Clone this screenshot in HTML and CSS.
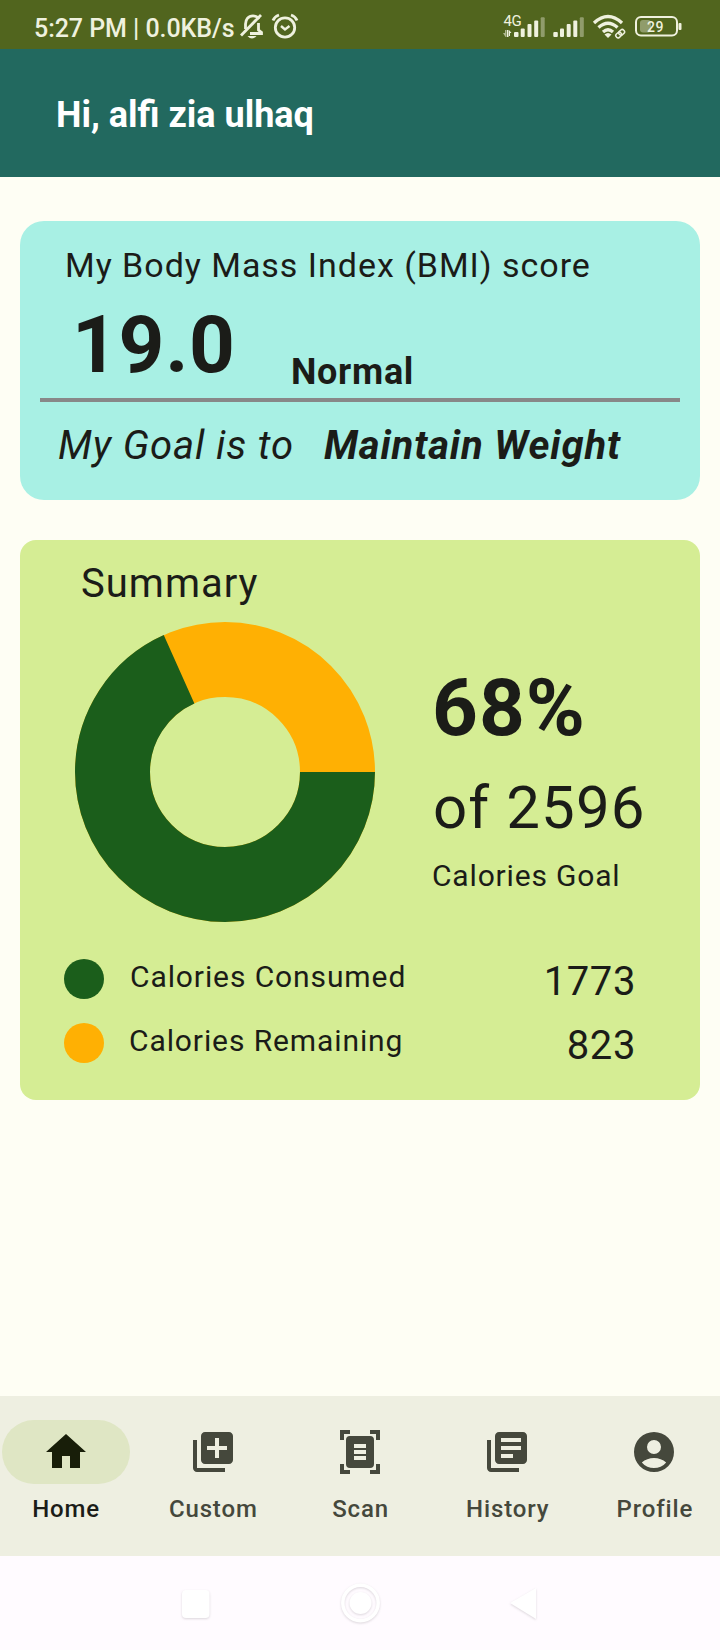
FILE: index.html
```html
<!DOCTYPE html>
<html lang="en">
<head>
<meta charset="utf-8">
<title>Home</title>
<link rel="stylesheet" href="styles.css">
</head>
<body>
<div class="phone">
  <div class="status-bar">
    <span class="status-text">5:27 PM | 0.0KB/s</span>
    <svg class="bell" width="26" height="28" viewBox="0 0 26 28" fill="none" stroke="#eff1de" stroke-width="2.800">
      <path d="M20 6C18 3.500 16 2.800 14 2.800C9 2.800 6.500 7 6.500 11V16M11 20.500H22.500V19.500L19.500 17V10"/>
      <path d="M2 22.500L22 2"/>
      <path d="M8.500 23H17.500Q13 28 8.500 23Z" fill="#eff1de" stroke="none"/>
    </svg>
    <svg class="alarm" width="28" height="28" viewBox="0 0 28 28" fill="none" stroke="#eff1de" stroke-width="2.800">
      <circle cx="14" cy="14.500" r="9.700"/>
      <path d="M10 13L14 16.500L18.500 13" stroke-width="2.400"/>
      <path d="M2 7.500Q3.500 3.500 8 2M20 2Q24.500 3.500 26 7.500" stroke-width="2.800"/>
    </svg>
    <svg class="signal" width="84" height="28" viewBox="0 0 84 28" fill="#eff1de">
      <text class="network" x="1.500" y="12.500">4G</text>
      <path d="M1 20H3V17H4.500V24H3.500Z" opacity=".6"/>
      <path d="M5 17H6.500V24H5ZM7 17L9.500 20H8V23H7Z"/>
      <rect x="12" y="19" width="4.500" height="5" rx="1"/>
      <rect x="18.700" y="15.500" width="4" height="8.500" rx="1"/>
      <rect x="25.500" y="11" width="4" height="13" rx="1"/>
      <rect x="32.200" y="7.500" width="4" height="16.500" rx="1"/>
      <rect x="38.700" y="4.300" width="4" height="19.700" rx="1" opacity=".4"/>
      <rect x="51.300" y="19" width="4.500" height="5" rx="1"/>
      <rect x="58" y="15.500" width="4" height="8.500" rx="1"/>
      <rect x="64.700" y="11" width="4" height="13" rx="1"/>
      <rect x="71.300" y="7.500" width="4" height="16.500" rx="1"/>
      <rect x="77.800" y="4.300" width="4" height="19.700" rx="1" opacity=".4"/>
    </svg>
    <svg class="wifi" width="34" height="26" viewBox="0 0 34 26" fill="none" stroke="#eff1de">
      <path d="M2 9Q16 -4 30 9M6.500 13.500Q16 5 25.500 13.500M11 18Q16 13.500 21 18" stroke-width="3.300"/>
      <path d="M12.500 20.500Q16 17.500 19.500 20.500L16 24Z" fill="#eff1de" stroke="none"/>
      <g transform="rotate(-42 28 19.500)" stroke-width="1.500"><rect x="23" y="17.500" width="6" height="4.500" rx="2"/><rect x="27" y="17.500" width="6" height="4.500" rx="2"/></g>
    </svg>
    <svg class="battery" width="48" height="22" viewBox="0 0 48 22">
      <rect x="1" y="1" width="41" height="18.500" rx="5" fill="none" stroke="#eff1de" stroke-width="2"/>
      <rect x="5" y="4" width="11" height="12.500" rx="3" fill="#eff1de" opacity=".4"/>
      <rect x="43.500" y="7" width="3" height="7" rx="1" fill="#eff1de"/>
      <text class="charge" x="12" y="15.500" fill="#eff1de">29</text>
    </svg>
  </div>
  <header class="app-bar"><h1>Hi, alfi zia ulhaq</h1></header>
  <main class="content">
    <section class="card bmi">
      <p class="bmi-title">My Body Mass Index (BMI) score</p>
      <div class="bmi-row"><span class="score">19.0</span><span class="level">Normal</span></div>
      <hr>
      <p class="goal"><span>My Goal is to</span><b>Maintain Weight</b></p>
    </section>
    <section class="card summary">
      <h2>Summary</h2>
      <div class="overview">
        <svg class="donut" width="300" height="300" viewBox="0 0 300 300">
          <circle cx="150" cy="150" r="112.500" fill="none" stroke="#ffb003" stroke-width="75"/>
          <circle cx="150" cy="150" r="112.500" fill="none" stroke="#1b5e1b" stroke-width="75" pathLength="100" stroke-dasharray="68.300 31.700"/>
        </svg>
        <div class="figures">
          <span class="percent">68%</span>
          <span class="total">of 2596</span>
          <span class="caption">Calories Goal</span>
        </div>
      </div>
      <ul class="legend">
        <li><i class="dot consumed"></i><span>Calories Consumed</span><b>1773</b></li>
        <li><i class="dot remaining"></i><span class="nudge">Calories Remaining</span><b>823</b></li>
      </ul>
    </section>
  </main>
  <nav class="tabs">
    <a class="tab active"><span class="pill"><svg viewBox="0 0 24 24"><path d="M10 20v-6h4v6h5v-8h3L12 3 2 12h3v8z"/></svg></span><span class="label">Home</span></a>
    <a class="tab"><span class="pill"><svg viewBox="0 0 24 24"><path d="M4 6H2v14c0 1.100.900 2 2 2h14v-2H4V6zm16-4H8c-1.100 0-2 .900-2 2v12c0 1.100.900 2 2 2h12c1.100 0 2-.900 2-2V4c0-1.100-.900-2-2-2zm-1 9h-4v4h-2v-4H9V9h4V5h2v4h4v2z"/></svg></span><span class="label">Custom</span></a>
    <a class="tab"><span class="pill"><svg viewBox="0 0 24 24"><path fill-rule="evenodd" d="M2 1H7V3H4V6H2ZM17 1H22V6H20V3H17ZM2 18H4V21H7V23H2ZM20 18H22V23H17V21H20ZM7 4H17Q19 4 19 6V18Q19 20 17 20H7Q5 20 5 18V6Q5 4 7 4ZM9 8V10H15V8ZM9 11V13H15V11ZM9 14V16H15V14Z"/></svg></span><span class="label">Scan</span></a>
    <a class="tab"><span class="pill"><svg viewBox="0 0 24 24"><path d="M4 6H2v14c0 1.100.900 2 2 2h14v-2H4V6zm16-4H8c-1.100 0-2 .900-2 2v12c0 1.100.900 2 2 2h12c1.100 0 2-.900 2-2V4c0-1.100-.900-2-2-2zm-1 9H9V9h10v2zm-4 4H9v-2h6v2zm4-8H9V5h10v2z"/></svg></span><span class="label">History</span></a>
    <a class="tab"><span class="pill"><svg viewBox="0 0 24 24"><path fill-rule="evenodd" d="M12 2a10 10 0 1 0 0 20a10 10 0 1 0 0-20zM12 6a3.500 3.500 0 1 1 0 7a3.500 3.500 0 1 1 0-7zM12 20C9.700 20 7.500 19 5.900 17.200C7.500 15.800 9.700 15 12 15C14.300 15 16.500 15.800 18.100 17.200C16.500 19 14.300 20 12 20Z"/></svg></span><span class="label">Profile</span></a>
  </nav>
  <div class="system-nav">
    <svg width="40" height="44" viewBox="0 0 40 44"><rect x="6" y="9" width="27.500" height="28" rx="4"/></svg>
    <svg width="44" height="44" viewBox="0 0 44 44"><circle class="ring" cx="22.500" cy="22" r="17.700"/><circle cx="22.500" cy="22" r="11"/></svg>
    <svg width="40" height="44" viewBox="0 0 40 44"><path d="M6 22L32 7V38Z"/></svg>
  </div>
</div>
</body>
</html>
```
FILE: styles.css
```css
* { box-sizing: border-box; }
body { margin: 0; font-family: Roboto, sans-serif; color: #1b1c18; }
h1, h2, p, ul { margin: 0; padding: 0; font-weight: 400; }
svg { display: block; flex: none; }

.phone { width: 720px; height: 1650px; display: flex; flex-direction: column; background: #fefef4; letter-spacing: 1px; overflow: hidden; }

.status-bar { height: 49px; flex: none; background: #51651e; color: #eff1de; display: flex; align-items: flex-start; padding: 0 37px 0 34px; }
.status-text { font-size: 25px; line-height: 30px; font-weight: 500; letter-spacing: -.05px; margin-top: 14px; width: 205px; white-space: nowrap; }
.bell { margin: 13px 0 0 0; }
.alarm { margin: 13px 0 0 6px; }
.signal { margin: 13px 0 0 auto; }
.wifi { margin: 14px 0 0 6px; }
.battery { margin: 16px 0 0 9px; }
.network { font-size: 15px; letter-spacing: -.5px; }
.charge { font-size: 14px; font-weight: 500; letter-spacing: .5px; }

.app-bar { height: 128px; flex: none; background: #22695f; color: #fff; padding: 43px 56px 0; }
.app-bar h1 { font-size: 36px; line-height: 46px; font-weight: 700; letter-spacing: 0; }

.content { flex: 1; padding: 44px 20px 0; display: flex; flex-direction: column; gap: 40px; }
.bmi { height: 279px; background: #a8f0e4; border-radius: 24px; padding: 20px; }
.bmi-title { font-size: 34px; line-height: 48px; padding-left: 25px; letter-spacing: .97px; }
.bmi-row { display: flex; align-items: flex-end; height: 109px; padding-left: 32px; }
.score { font-size: 80px; line-height: 94px; font-weight: 700; width: 219px; padding-bottom: 6px; letter-spacing: .7px; }
.level { font-size: 36px; line-height: 48px; font-weight: 700; padding-bottom: 2px; letter-spacing: .7px; }
.bmi hr { height: 4px; margin: 0; border: 0; background: #888888; }
.goal { font-size: 40px; line-height: 48px; font-style: italic; display: flex; gap: 30px; padding: 20px 0 0 18px; letter-spacing: .87px; }

.summary { height: 560px; background: #d5ed94; border-radius: 16px; padding-top: 20px; }
.summary h2 { font-size: 40px; line-height: 48px; padding-left: 61px; }
.overview { display: flex; padding: 14px 0 0 55px; }
.figures { display: flex; flex-direction: column; padding-left: 57px; }
.percent { font-size: 80px; line-height: 94px; font-weight: 700; margin-top: 39px; }
.total { font-size: 60px; line-height: 72px; margin: 17px 0 0 1px; letter-spacing: 1.1px; }
.caption { font-size: 30px; line-height: 48px; margin-top: 8px; letter-spacing: .83px; }
.legend { list-style: none; padding: 37px 64px 0 44px; display: flex; flex-direction: column; gap: 24px; }
.legend li { height: 40px; display: flex; align-items: center; font-size: 30px; letter-spacing: .9px; }
.legend span { margin: -6px auto 0 26px; }
.legend .nudge { margin-left: 25px; }
.legend b { font-size: 40px; font-weight: 400; margin-top: 4px; letter-spacing: .6px; }
.dot { width: 40px; height: 40px; border-radius: 50%; }
.consumed { background: #1b5e1b; }
.remaining { background: #ffb003; }

.tabs { height: 160px; flex: none; background: #eeefe1; display: flex; gap: 16px; padding-top: 24px; }
.tab { flex: 1 1 0; min-width: 0; display: flex; flex-direction: column; align-items: center; gap: 9px; font-size: 24px; line-height: 32px; font-weight: 500; color: #45483c; }
.label { padding-left: 1px; letter-spacing: .85px; }
.active { color: #1b1c18; }
.pill { width: 128px; height: 64px; border-radius: 32px; display: flex; align-items: center; justify-content: center; }
.pill svg { width: 48px; height: 48px; fill: #45483c; }
.active .pill { background: #dfe6c4; }
.active svg { fill: #181e09; }

.system-nav { height: 94px; flex: none; background: #fffbff; display: flex; justify-content: space-between; align-items: flex-start; padding: 25px 176px; }
.system-nav svg { fill: #fff; overflow: visible; filter: drop-shadow(0 1px 1px rgba(60, 50, 60, .18)); }
.system-nav .ring { fill: none; stroke: #fff; stroke-width: 3.500; }
```
